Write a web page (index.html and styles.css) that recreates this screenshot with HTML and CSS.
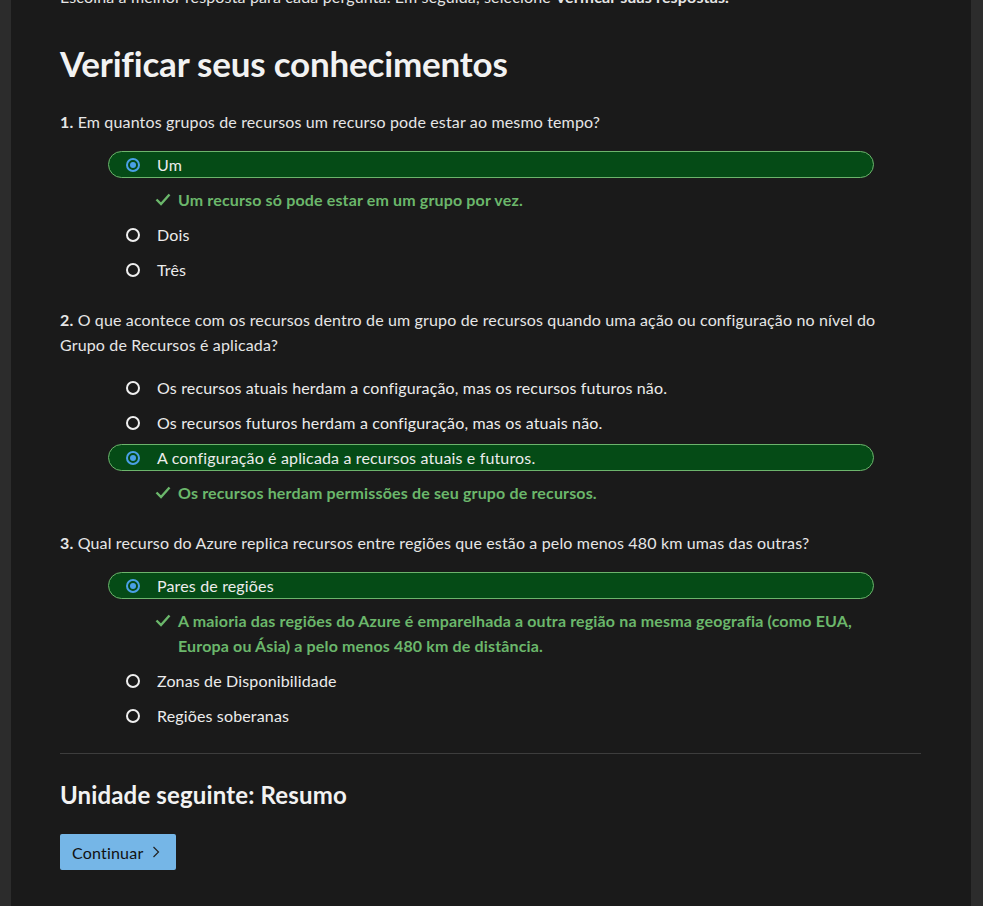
FILE: index.html
```html
<!DOCTYPE html>
<html lang="pt-BR">
<head>
<meta charset="utf-8">
<title>Verificar seus conhecimentos</title>
<link rel="stylesheet" href="styles.css">
</head>
<body>
<main class="main">
  <p class="intro">Escolha a melhor resposta para cada pergunta. Em seguida, selecione <strong>Verificar suas respostas.</strong></p>
  <h1 class="title">Verificar seus conhecimentos</h1>

  <section class="question">
    <p class="q-text"><strong>1.</strong> Em quantos grupos de recursos um recurso pode estar ao mesmo tempo?</p>
    <div class="options">
      <div class="option selected"><span class="radio"></span><span>Um</span></div>
      <div class="feedback"><svg class="check" viewBox="0 0 16 16" width="16" height="16"><path d="M1.5 8.5 L6 13 L14.5 3.5" fill="none" stroke="currentColor" stroke-width="2.4"/></svg><span>Um recurso só pode estar em um grupo por vez.</span></div>
      <div class="option"><span class="radio"></span><span>Dois</span></div>
      <div class="option"><span class="radio"></span><span>Três</span></div>
    </div>
  </section>

  <section class="question">
    <p class="q-text"><strong>2.</strong> O que acontece com os recursos dentro de um grupo de recursos quando uma ação ou configuração no nível do Grupo de Recursos é aplicada?</p>
    <div class="options">
      <div class="option"><span class="radio"></span><span>Os recursos atuais herdam a configuração, mas os recursos futuros não.</span></div>
      <div class="option"><span class="radio"></span><span>Os recursos futuros herdam a configuração, mas os atuais não.</span></div>
      <div class="option selected"><span class="radio"></span><span>A configuração é aplicada a recursos atuais e futuros.</span></div>
      <div class="feedback"><svg class="check" viewBox="0 0 16 16" width="16" height="16"><path d="M1.5 8.5 L6 13 L14.5 3.5" fill="none" stroke="currentColor" stroke-width="2.4"/></svg><span>Os recursos herdam permissões de seu grupo de recursos.</span></div>
    </div>
  </section>

  <section class="question">
    <p class="q-text"><strong>3.</strong> Qual recurso do Azure replica recursos entre regiões que estão a pelo menos 480 km umas das outras?</p>
    <div class="options">
      <div class="option selected"><span class="radio"></span><span>Pares de regiões</span></div>
      <div class="feedback"><svg class="check" viewBox="0 0 16 16" width="16" height="16"><path d="M1.5 8.5 L6 13 L14.5 3.5" fill="none" stroke="currentColor" stroke-width="2.4"/></svg><span>A maioria das regiões do Azure é emparelhada a outra região na mesma geografia (como EUA, Europa ou Ásia) a pelo menos 480 km de distância.</span></div>
      <div class="option"><span class="radio"></span><span>Zonas de Disponibilidade</span></div>
      <div class="option"><span class="radio"></span><span>Regiões soberanas</span></div>
    </div>
  </section>

  <hr class="divider">

  <h2 class="next">Unidade seguinte: Resumo</h2>
  <button class="btn" type="button">Continuar <svg class="chev" viewBox="0 0 10 16" width="10" height="16"><path d="M2.5 3 L7.5 8 L2.5 13" fill="none" stroke="currentColor" stroke-width="1.2"/></svg></button>
</main>
</body>
</html>
```

FILE: styles.css
```css
html, body {
  margin: 0;
  padding: 0;
}
body {
  background: #2c2c2c;
  font-family: "Lato", "Noto Sans", sans-serif;
  color: #e6e6e6;
  font-size: 16px;
  letter-spacing: 0.15px;
  overflow: hidden;
  height: 906px;
}
.main {
  display: flow-root;
  background: #1a1a1a;
  margin: 0 12px 0 11px;
  padding: 0 50px 40px 49px;
  height: 906px;
  box-sizing: border-box;
}
.intro {
  margin: -15px 0 0;
  line-height: 24px;
  color: #e6e6e6;
}
.intro strong {
  font-weight: 700;
}
.title {
  margin: 31px 0 0;
  font-size: 35px;
  font-weight: 700;
  line-height: 46px;
  color: #f2f2f2;
  letter-spacing: -0.2px;
}
.question {
  margin-top: 23px;
}
.question + .question {
  margin-top: 24px;
}
.q-text {
  margin: 0;
  line-height: 25px;
  color: #e6e6e6;
}
.q-text strong {
  font-weight: 700;
}
.options {
  margin: 17px 47px 0 48px;
  display: flex;
  flex-direction: column;
  gap: 8px;
}
.option {
  height: 27px;
  display: flex;
  align-items: center;
  gap: 17px;
  padding-left: 17px;
  border: 1px solid transparent;
  border-radius: 14px;
  box-sizing: border-box;
  color: #ececec;
}
.option.selected {
  background: #054b16;
  border-color: #6cb46c;
}
.radio {
  width: 14px;
  height: 14px;
  border: 2px solid #efefef;
  border-radius: 50%;
  box-sizing: border-box;
  flex: none;
  display: flex;
  align-items: center;
  justify-content: center;
}
.selected .radio {
  border-color: #4aa0e6;
}
.selected .radio::after {
  content: "";
  width: 6px;
  height: 6px;
  border-radius: 50%;
  background: #4aa0e6;
}
.feedback {
  display: flex;
  align-items: flex-start;
  gap: 7px;
  padding-left: 47px;
  color: #6bb76b;
  font-weight: 700;
  line-height: 25px;
  padding-top: 1px;
  padding-bottom: 1px;
}
.check {
  flex: none;
  margin-top: 4px;
}
.divider {
  border: none;
  border-top: 1px solid #3d3d3d;
  margin: 24px 0 0;
}
.next {
  margin: 25px 0 0;
  font-size: 24px;
  font-weight: 700;
  line-height: 32px;
  color: #f2f2f2;
}
.btn {
  margin-top: 23px;
  height: 36px;
  padding: 0 15px 0 12px;
  background: #75b6e7;
  color: #111;
  border: none;
  border-radius: 2px;
  font-family: inherit;
  font-size: 16px;
  letter-spacing: 0.2px;
  display: inline-flex;
  align-items: center;
  gap: 8px;
}
.chev {
  color: #222;
}
```
